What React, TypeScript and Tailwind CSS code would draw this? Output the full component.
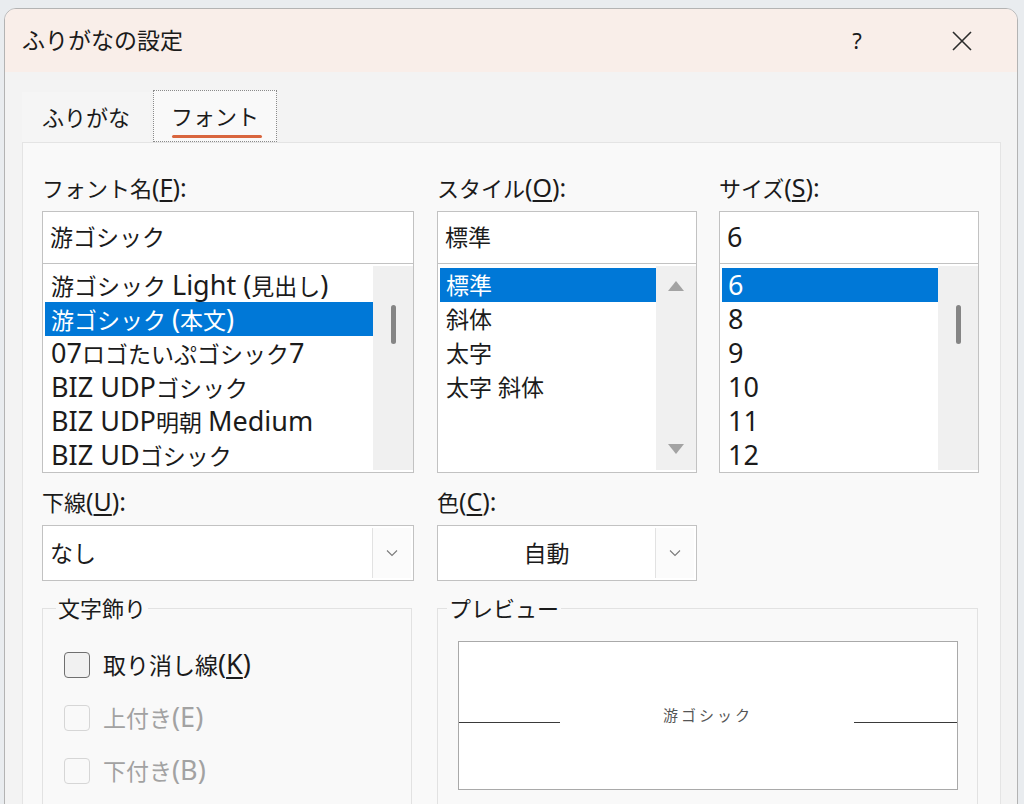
import type { ReactNode } from 'react'

const fontList = ['游ゴシック Light (見出し)', '游ゴシック (本文)', '07ロゴたいぷゴシック7', 'BIZ UDPゴシック', 'BIZ UDP明朝 Medium', 'BIZ UDゴシック']
const styleList = ['標準', '斜体', '太字', '太字 斜体']
const sizeList = ['6', '8', '9', '10', '11', '12']

// Yu Gothic draws latin letters larger than kana/kanji, so ascii runs get a bigger size
function Mixed({ text, latin }: { text: string; latin: string }) {
  return (
    <>
      {text.split(/([\x21-\x7e][\x20-\x7e]*)/).map((part, i) =>
        /^[\x21-\x7e]/.test(part) ? (
          <span key={i} className={latin}>
            {part}
          </span>
        ) : (
          part
        )
      )}
    </>
  )
}

function Label({ text, keyChar }: { text: string; keyChar: string }) {
  return (
    <div className="mb-[8px] h-[32px] text-[22px] leading-[32px]">
      {text}
      <span className="text-[25px]">
        (<span className="underline underline-offset-[3px]">{keyChar}</span>):
      </span>
    </div>
  )
}

function TextBox({ value }: { value: string }) {
  return (
    <div className="flex h-[53px] items-center border border-[#c2c2c2] bg-white pl-[7px] text-[23px]">
      <Mixed text={value} latin="text-[27px]" />
    </div>
  )
}

function Scrollbar({ arrows, thumb }: { arrows?: boolean; thumb?: boolean }) {
  return (
    <div className="my-[2px] flex w-[40px] flex-col items-center justify-between bg-[#f0f0f0] pb-[16px] pt-[15px]">
      {arrows ? (
        <>
          <svg width="16" height="10" viewBox="0 0 16 10">
            <path d="M8 0 L16 10 L0 10 Z" fill="#a3a3a3" />
          </svg>
          <svg width="16" height="10" viewBox="0 0 16 10">
            <path d="M0 0 L16 0 L8 10 Z" fill="#a3a3a3" />
          </svg>
        </>
      ) : (
        <div className="flex-1">
          {thumb && <div className="mt-[24px] h-[39px] w-[5px] rounded-full bg-[#858585]" />}
        </div>
      )}
    </div>
  )
}

function ListBox({ items, selected, arrows }: { items: string[]; selected: number; arrows?: boolean }) {
  return (
    <div className="-mt-px flex h-[210px] border border-[#c2c2c2] bg-white">
      <div className="flex-1 overflow-hidden pl-[2px] pt-[4px]">
        {items.map((item, i) => (
          <div
            key={item}
            className={
              'flex h-[34px] items-center whitespace-nowrap pl-[6px] text-[23px] leading-[34px] ' +
              (i === selected ? 'bg-[#0078d7] text-white' : '')
            }
          >
            <span>
              <Mixed text={item} latin="text-[27px]" />
            </span>
          </div>
        ))}
      </div>
      <Scrollbar arrows={arrows} thumb={!arrows} />
    </div>
  )
}

function Combo({ value, center }: { value: string; center?: boolean }) {
  return (
    <div className="flex h-[56px] border border-[#c2c2c2] bg-white">
      <div className={'flex flex-1 items-center text-[23px] ' + (center ? 'justify-center' : 'pl-[7px]')}>{value}</div>
      <div className="my-[2px] mr-[2px] flex w-[39px] items-center justify-center border-l border-[#e2e2e2] bg-[#fbfbfb]">
        <svg width="12" height="8" viewBox="0 0 12 8">
          <path d="M1 1.5 L6 6.5 L11 1.5" fill="none" stroke="#7a7a7a" strokeWidth="1.1" />
        </svg>
      </div>
    </div>
  )
}

function Group({ title, className, children }: { title: string; className: string; children: ReactNode }) {
  return (
    <fieldset className={'border border-[#e2e2e2] ' + className}>
      <legend className="px-[2px] text-[22px] leading-[32px]">{title}</legend>
      {children}
    </fieldset>
  )
}

function Check({ label, keyChar, disabled }: { label: string; keyChar: string; disabled?: boolean }) {
  return (
    <div className={'flex h-[53px] items-center ' + (disabled ? 'text-[#a2a2a2]' : '')}>
      <div
        className={
          'h-[26px] w-[26px] rounded-[4px] border-[1.5px] ' +
          (disabled ? 'border-[#d6d6d6] bg-[#f9f9f9]' : 'border-[#6f6f6f] bg-[#f1f1f1]')
        }
      />
      <span className="ml-[13px] text-[23px]">
        {label}
        <span className="text-[27px]">
          ({disabled ? keyChar : <span className="underline underline-offset-[3px]">{keyChar}</span>})
        </span>
      </span>
    </div>
  )
}

export default function App() {
  return (
    <div className="h-[804px] w-[1024px] overflow-hidden bg-[#e9ecef] pl-[4px] pr-[6px] pt-[8px] font-['Noto_Sans','Noto_Sans_CJK_JP',sans-serif] text-[#1b1b1b]">
      <div className="flex h-[820px] flex-col overflow-hidden rounded-t-[12px] border border-[#b3b3b3] bg-[#f3f3f3]">
        {/* title bar */}
        <div className="flex h-[63px] items-center bg-[#f9eee9] pl-[17px] pr-[32px]">
          <div className="flex-1 text-[23px]">ふりがなの設定</div>
          <div className="w-[46px] text-center text-[22px]">?</div>
          <div className="ml-[59px] flex w-[46px] justify-center">
            <svg width="20" height="20" viewBox="0 0 20 20">
              <path d="M1 1 L19 19 M19 1 L1 19" stroke="#2b2b2b" strokeWidth="1.6" />
            </svg>
          </div>
        </div>

        <div className="flex flex-1 flex-col pl-[17px] pr-[16px] pt-[18px]">
          {/* tabs */}
          <div className="flex h-[52px] items-end">
            <div className="flex h-[50px] w-[128px] items-center justify-center bg-[#f5f5f5] text-[22px]">ふりがな</div>
            <div className="relative ml-[3px] flex h-[52px] w-[124px] items-center justify-center border border-dotted border-[#8a8a8a] bg-[#f9f9f9] text-[22px]">
              フォント
              <div className="absolute bottom-[3px] left-[18px] h-[3px] w-[90px] rounded-full bg-[#d9663e]" />
            </div>
          </div>

          {/* panel */}
          <div className="flex-1 border border-[#e4e4e4] bg-[#f9f9f9] pl-[19px] pt-[28px]">
            <div className="flex">
              <div className="w-[372px]">
                <Label text="フォント名" keyChar="F" />
                <TextBox value="游ゴシック" />
                <ListBox items={fontList} selected={1} />
              </div>
              <div className="ml-[23px] w-[260px]">
                <Label text="スタイル" keyChar="O" />
                <TextBox value="標準" />
                <ListBox items={styleList} selected={0} arrows />
              </div>
              <div className="ml-[22px] w-[260px]">
                <Label text="サイズ" keyChar="S" />
                <TextBox value="6" />
                <ListBox items={sizeList} selected={0} />
              </div>
            </div>

            <div className="mt-[12px] flex">
              <div className="w-[372px]">
                <Label text="下線" keyChar="U" />
                <Combo value="なし" />
              </div>
              <div className="ml-[23px] w-[260px]">
                <Label text="色" keyChar="C" />
                <Combo value="自動" center />
              </div>
            </div>

            <div className="mt-[11px] flex items-start">
              <Group title="文字飾り" className="h-[230px] w-[370px] pl-[13px]">
                <div className="pl-[8px] pt-[14px]">
                  <Check label="取り消し線" keyChar="K" />
                  <Check label="上付き" keyChar="E" disabled />
                  <Check label="下付き" keyChar="B" disabled />
                </div>
              </Group>
              <Group title="プレビュー" className="ml-[25px] h-[230px] w-[541px] pl-[9px]">
                <div className="relative ml-[11px] mt-[17px] h-[149px] w-[500px] border border-[#a9a9a9] bg-white">
                  <div className="absolute left-0 top-[80px] h-px w-[101px] bg-[#3a3a3a]" />
                  <div className="absolute right-0 top-[80px] h-px w-[103px] bg-[#3a3a3a]" />
                  <div className="absolute left-0 right-0 top-[62px] text-center text-[15px] leading-[22px] tracking-[3px] text-[#555]">
                    游ゴシック
                  </div>
                </div>
              </Group>
            </div>
          </div>
        </div>
      </div>
    </div>
  )
}
